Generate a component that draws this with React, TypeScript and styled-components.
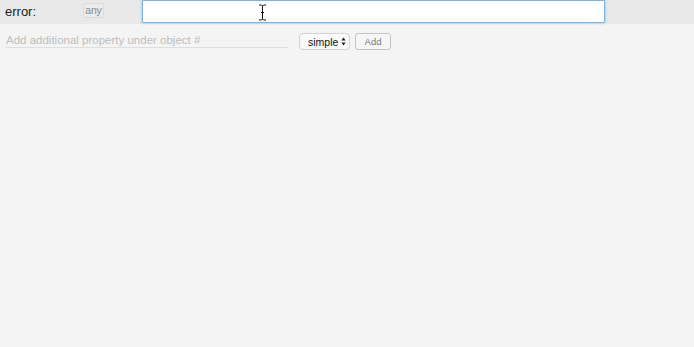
import React from "react";
import styled, { createGlobalStyle } from "styled-components";

const Global = createGlobalStyle`
  html, body { margin: 0; padding: 0; background: #f4f4f4; }
  body { font-family: "Liberation Sans", Arial, Helvetica, sans-serif; }
  #root { min-height: 347px; }
`;

const Page = styled.div`
  width: 694px;
  height: 347px;
  background: #f4f4f4;
  position: relative;
  overflow: hidden;
`;

const TopBar = styled.div`
  height: 24px;
  background: #e8e9e8;
  display: flex;
  align-items: flex-start;
  box-sizing: border-box;
`;

const Label = styled.span`
  width: 83px;
  padding-left: 5px;
  box-sizing: border-box;
  font-size: 13px;
  line-height: 24px;
  color: #222;
`;

const TypeBadge = styled.span`
  margin-top: 3px;
  width: 21px;
  height: 15px;
  box-sizing: border-box;
  border: 1px solid #dadada;
  border-radius: 2px;
  background: #ececec;
  color: #8a8a8a;
  font-size: 10.5px;
  line-height: 13px;
  text-align: center;
  letter-spacing: -0.2px;
`;

const ValueInput = styled.input`
  margin-left: 38px;
  width: 463px;
  height: 23px;
  box-sizing: border-box;
  border: 1px solid #77b3e3;
  border-radius: 1px;
  background: #fff;
  box-shadow: 0 0 2px 1px rgba(120, 170, 230, 0.35);
  outline: none;
  padding: 0 4px;
  font-family: inherit;
  font-size: 13px;
`;

const AddRow = styled.div`
  display: flex;
  align-items: flex-start;
  padding: 9px 0 0 5px;
`;

const PropInput = styled.input`
  width: 283px;
  height: 15px;
  box-sizing: border-box;
  border: none;
  border-bottom: 1px solid #dedede;
  background: transparent;
  padding: 0 0 1px 1px;
  margin-top: 0;
  font-family: inherit;
  font-size: 11.5px;
  line-height: 13px;
  outline: none;
  &::placeholder { color: #bdbdbd; }
`;

const SelectBox = styled.div`
  margin-left: 11px;
  width: 51px;
  height: 17px;
  box-sizing: border-box;
  border: 1px solid #d2d2d2;
  border-radius: 4px;
  background: #f9f9f9;
  display: flex;
  align-items: center;
  padding-left: 8px;
  gap: 3px;
  font-size: 10.5px;
  color: #111;
`;

const AddButton = styled.button`
  margin-left: 5px;
  width: 36px;
  height: 17px;
  box-sizing: border-box;
  border: 1px solid #c4c4c4;
  border-radius: 3px;
  background: #f6f6f6;
  color: #777;
  font-family: inherit;
  font-size: 9.5px;
  padding: 0;
  line-height: 15px;
`;

const Cursor = styled.svg`
  position: absolute;
  left: 258px;
  top: 4px;
`;

function Arrows() {
  return (
    <svg width="5" height="9" viewBox="0 0 5 9">
      <path d="M2.5 0.5 L4.6 3.5 H0.4 Z" fill="#222" />
      <path d="M2.5 8.5 L4.6 5.5 H0.4 Z" fill="#222" />
    </svg>
  );
}

export default function App() {
  return (
    <Page>
      <Global />
      <TopBar>
        <Label>error:</Label>
        <TypeBadge>any</TypeBadge>
        <ValueInput defaultValue="" />
      </TopBar>
      <AddRow>
        <PropInput placeholder="Add additional property under object #" />
        <SelectBox>
          <span>simple</span>
          <Arrows />
        </SelectBox>
        <AddButton>Add</AddButton>
      </AddRow>
      <Cursor width="9" height="17" viewBox="0 0 9 17">
        <path d="M1 1 H3.5 L4.5 2 L5.5 1 H8 M4.5 2 V15 M1 16 H3.5 L4.5 15 L5.5 16 H8 M3 8.5 H6" stroke="#fff" strokeWidth="2.2" fill="none" />
        <path d="M1 1 H3.5 L4.5 2 L5.5 1 H8 M4.5 2 V15 M1 16 H3.5 L4.5 15 L5.5 16 H8 M3 8.5 H6" stroke="#111" strokeWidth="1" fill="none" />
      </Cursor>
    </Page>
  );
}
